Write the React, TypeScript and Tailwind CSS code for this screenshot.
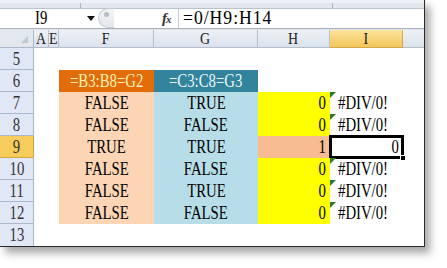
import React from 'react';

const serif = '[font-family:Liberation_Serif,Times_New_Roman,serif]';

type Cell = {
  text?: string;
  align?: 'left' | 'center' | 'right';
  bg?: string;
  color?: string;
  tri?: boolean;
  selected?: boolean;
};

function Txt({ children, align = 'center' }: { children: React.ReactNode; align?: 'left' | 'center' | 'right' }) {
  const origin = align === 'left' ? 'origin-left' : align === 'right' ? 'origin-right' : 'origin-center';
  return <span className={`inline-block scale-x-[0.82] whitespace-nowrap ${origin}`}>{children}</span>;
}

function ErrorMark() {
  return (
    <svg className="absolute top-0 left-0" width="6" height="6" viewBox="0 0 6 6">
      <path d="M0 0H6L0 6Z" fill="#2f7a32" />
    </svg>
  );
}

function DataCell({ cell }: { cell?: Cell }) {
  if (!cell) return <div />;
  const justify =
    cell.align === 'left' ? 'justify-start pl-[8px]' : cell.align === 'right' ? 'justify-end pr-[4px]' : 'justify-center';
  return (
    <div className={`relative flex items-center ${justify} ${cell.bg ?? ''} ${cell.color ?? 'text-black'}`}>
      {cell.tri && <ErrorMark />}
      {cell.text && <Txt align={cell.align}>{cell.text}</Txt>}
      {cell.selected && (
        <>
          <div className="absolute -inset-px border-[3px] border-black" />
          <div className="absolute -right-[3px] -bottom-[3px] w-[6px] h-[6px] bg-black border border-white" />
        </>
      )}
    </div>
  );
}

const F = (t: string): Cell => ({ text: t, bg: 'bg-[#fcd5b4]' });
const G = (t: string): Cell => ({ text: t, bg: 'bg-[#b7dee8]' });
const H = (t: string, bg = 'bg-[#ffff00]'): Cell => ({ text: t, align: 'right', bg });
const Ierr: Cell = { text: '#DIV/0!', align: 'left', tri: true };

const rows: { n: number; cells: (Cell | undefined)[] }[] = [
  { n: 5, cells: [] },
  {
    n: 6,
    cells: [
      { text: '=B3:B8=G2', bg: 'bg-[#e26b0a]', color: 'text-[#fff3b8]' },
      { text: '=C3:C8=G3', bg: 'bg-[#31849b]', color: 'text-[#eef6f8]' },
    ],
  },
  { n: 7, cells: [F('FALSE'), G('TRUE'), H('0'), Ierr] },
  { n: 8, cells: [F('FALSE'), G('FALSE'), H('0'), Ierr] },
  { n: 9, cells: [F('TRUE'), G('TRUE'), H('1', 'bg-[#f8bc92]'), { text: '0', align: 'right', selected: true }] },
  { n: 10, cells: [F('FALSE'), G('FALSE'), H('0'), Ierr] },
  { n: 11, cells: [F('FALSE'), G('TRUE'), H('0'), Ierr] },
  { n: 12, cells: [F('FALSE'), G('FALSE'), H('0'), Ierr] },
];

const grid = 'grid grid-cols-[34px_15px_10px_95px_104px_72px_73px_21px]';

export default function App() {
  return (
    <div className={`w-[447px] h-[268px] bg-white overflow-hidden ${serif}`}>
      <div className="w-[425px] h-[247px] flex flex-col bg-white border-r border-b border-[#2a2a2a] shadow-[5px_6px_8px_rgba(0,0,0,0.35)] overflow-hidden">
        {/* ribbon edge */}
        <div className="h-[9px] flex bg-[#e2e7ee] border-t-[3px] border-t-[#eef1f5] border-b border-b-[#b9c3cf]">
          <div className="w-[81px] border-r border-[#aab4c0]" />
          <div className="w-[252px] border-r border-[#aab4c0]" />
        </div>

        {/* formula bar */}
        <div className="h-[20px] flex items-center bg-white border-b border-[#aab4c0] text-[18px] leading-none text-black">
          <div className="w-[98px] h-full flex items-center justify-between pl-[35px] pr-[3px]">
            <Txt align="left">I9</Txt>
            <svg width="8" height="5" viewBox="0 0 8 5">
              <path d="M0 0H8L4 5Z" fill="#111" />
            </svg>
          </div>
          <div className="w-[60px] h-full flex items-center">
            <div className="w-[16px] h-[20px] rounded-l-full border-l border-t border-b border-[#c4cbd4] bg-gradient-to-b from-[#f2f4f7] to-[#e3e7ec] flex items-start pl-[5px] pt-[3px]">
              <div className="w-[5px] h-[5px] rounded-full bg-[#b5bcc6]" />
            </div>
          </div>
          <div className="w-[20px] h-full flex items-center justify-start pl-[4px] italic font-bold text-[15px] text-[#333]">
            f<span className="text-[11px] -ml-px mt-[3px]">x</span>
          </div>
          <div className="flex-1 h-full flex items-center pl-[4px] border-l border-[#c4cbd4]">
            <span className="inline-block scale-x-[0.98] origin-left tracking-[1px]">=0/H9:H14</span>
          </div>
        </div>
        <div className="h-px bg-[#dfe4ea]" />

        {/* column headers */}
        <div className={`${grid} h-[20px] text-[17px] leading-none text-[#222]`}>
          <div className="relative bg-[#e3e8ef] border-r border-b border-[#a9b7c9]">
            <svg className="absolute right-[5px] bottom-[4px]" width="7" height="7" viewBox="0 0 7 7">
              <path d="M7 0V7H0Z" fill="#c0c8d2" />
            </svg>
          </div>
          {['A', 'E', 'F', 'G', 'H'].map((c) => (
            <div
              key={c}
              className="flex items-center justify-center bg-gradient-to-b from-[#eef2f7] to-[#dbe2eb] border-r border-b border-[#b4bfcd]"
            >
              <Txt>{c}</Txt>
            </div>
          ))}
          <div className="flex items-center justify-center bg-gradient-to-b from-[#fbe39a] to-[#f4c659] border-r border-b border-[#d6a74c]">
            <Txt>I</Txt>
          </div>
          <div className="bg-gradient-to-b from-[#eef2f7] to-[#dbe2eb] border-b border-[#b4bfcd]" />
        </div>

        {/* rows */}
        {rows.map((r) => (
          <div key={r.n} className={`${grid} h-[22px] shrink-0 text-[18px] leading-none`}>
            <div
              className={`flex items-center justify-center border-r border-b text-[#333] ${
                r.n === 9 ? 'bg-[#f6cc5c] border-[#d2a647]' : 'bg-[#e1e8f5] border-[#a9b8cc]'
              }`}
            >
              <Txt>{r.n}</Txt>
            </div>
            <div />
            <div />
            <DataCell cell={r.cells[0]} />
            <DataCell cell={r.cells[1]} />
            <DataCell cell={r.cells[2]} />
            <DataCell cell={r.cells[3]} />
            <div />
          </div>
        ))}
        <div className={`${grid} h-[22px] shrink-0 text-[18px] leading-none`}>
          <div className="flex items-center justify-center bg-[#e1e8f5] border-r border-[#a9b8cc] text-[#333]">
            <Txt>13</Txt>
          </div>
        </div>
      </div>
    </div>
  );
}
